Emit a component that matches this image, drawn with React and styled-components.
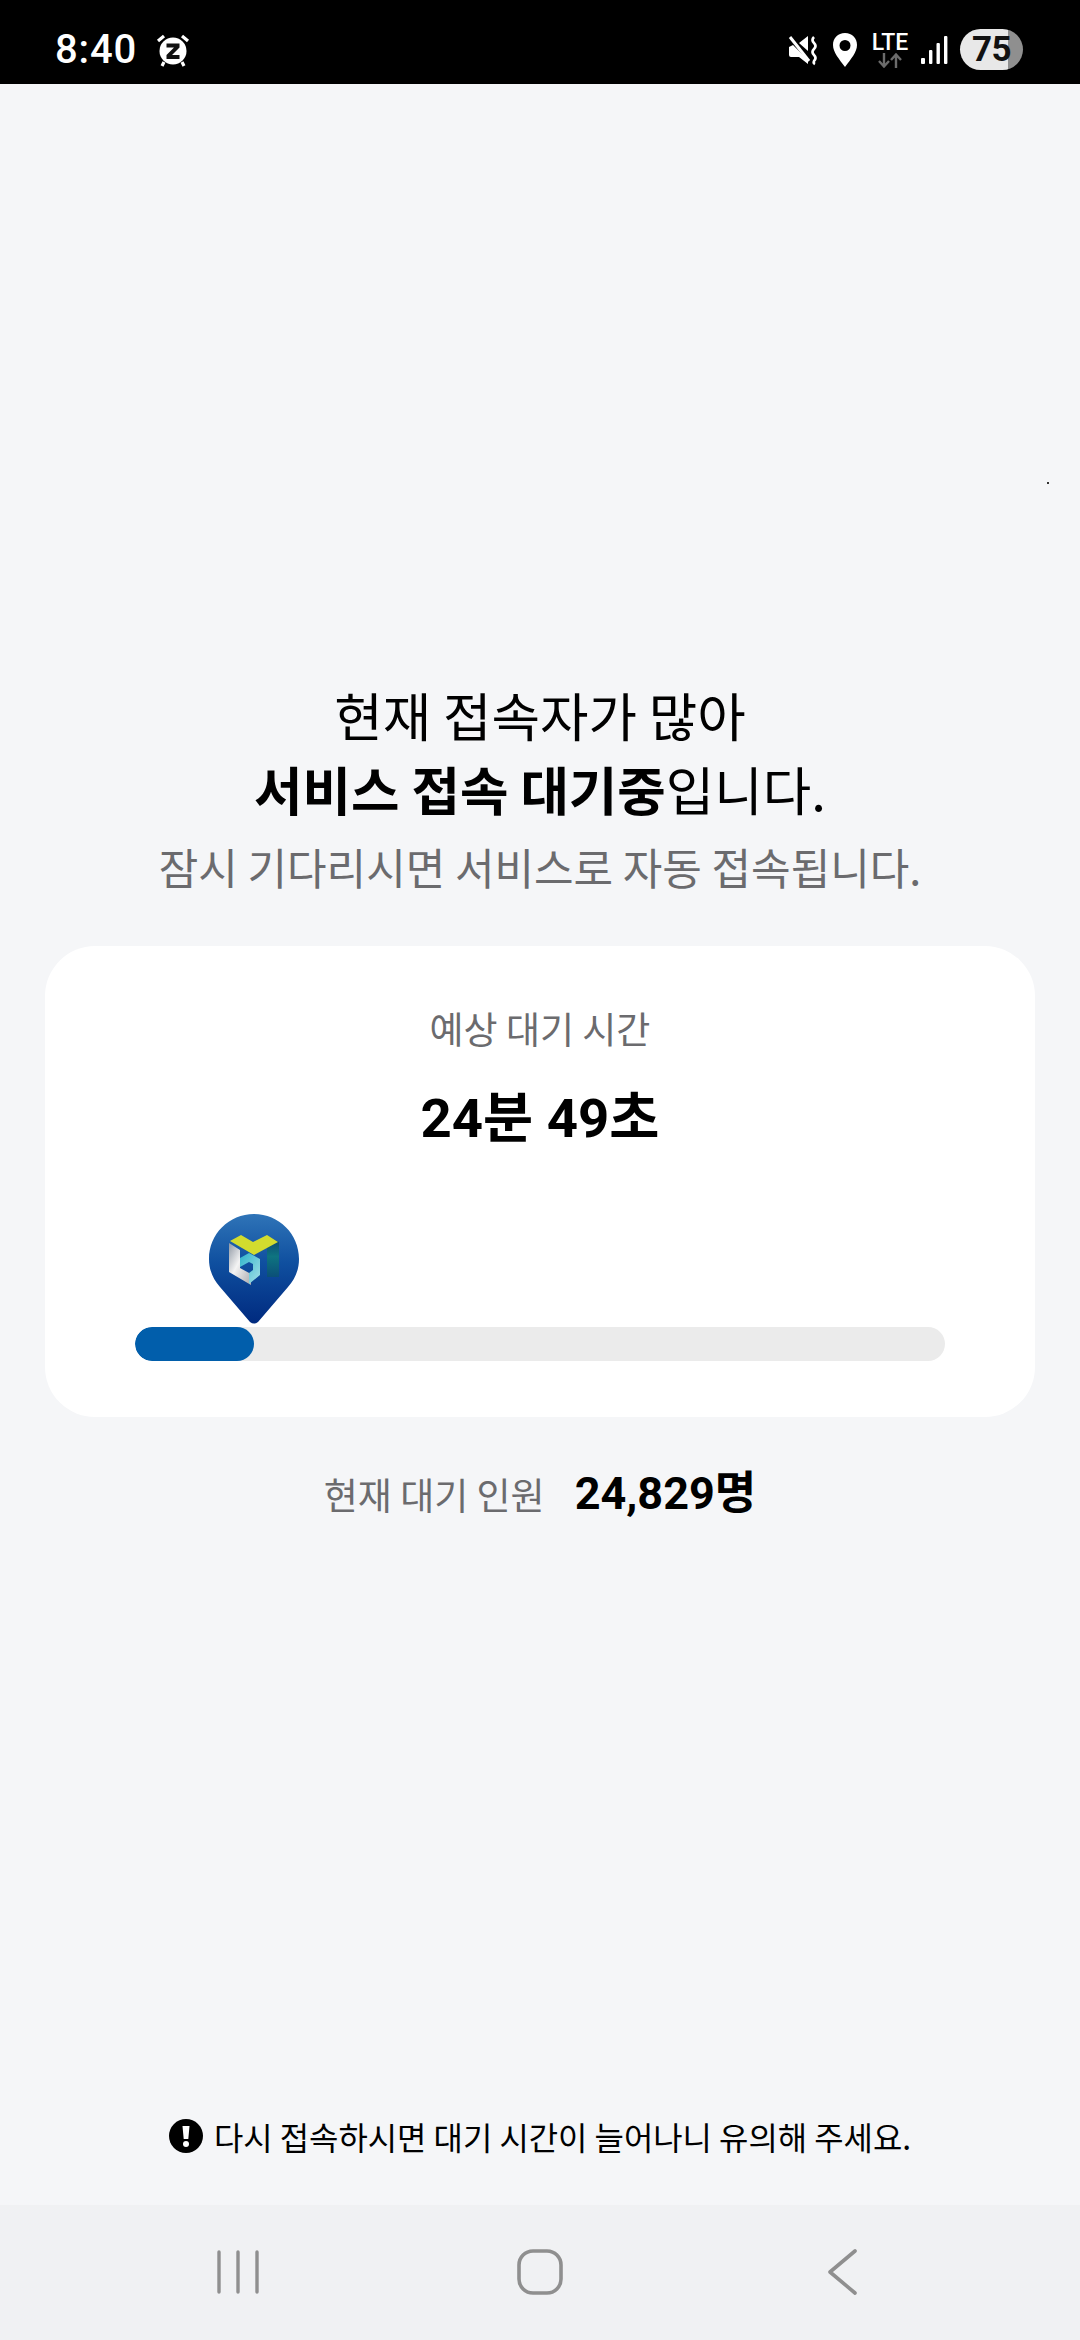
import React from 'react';
import { createGlobalStyle, styled } from 'styled-components';

const FONT = `'Noto Sans CJK KR', 'Noto Sans', sans-serif`;
const NUM_FONT = `Roboto, 'Noto Sans CJK KR', sans-serif`;

const GlobalStyle = createGlobalStyle`
  html, body {
    margin: 0;
    padding: 0;
    background: #f5f6f8;
  }
  * { box-sizing: border-box; }
`;

function App() {
  return (
    <Screen>
      <GlobalStyle />
      <StatusBar>
        <StatusLeft>
          <Clock>8:40</Clock>
          <AlarmIcon />
        </StatusLeft>
        <StatusRight>
          <MuteIcon />
          <PinIcon />
          <LteIcon />
          <SignalIcon />
          <Battery>
            <BatteryText>75</BatteryText>
          </Battery>
        </StatusRight>
      </StatusBar>

      <Main>
        <Speck />
        <Title>현재 접속자가 많아</Title>
        <Title>
          <strong>서비스 접속 대기중</strong>입니다.
        </Title>
        <Subtitle>잠시 기다리시면 서비스로 자동 접속됩니다.</Subtitle>

        <Card>
          <CardLabel>예상 대기 시간</CardLabel>
          <WaitTime>24분 49초</WaitTime>
          <Progress>
            <Marker>
              <MarkerPin />
            </Marker>
            <Track>
              <Fill />
            </Track>
          </Progress>
        </Card>

        <QueueRow>
          <QueueLabel>현재 대기 인원</QueueLabel>
          <QueueCount>24,829명</QueueCount>
        </QueueRow>

        <Notice>
          <NoticeIcon />
          <NoticeText>다시 접속하시면 대기 시간이 늘어나니 유의해 주세요.</NoticeText>
        </Notice>
      </Main>

      <NavBar>
        <RecentsIcon />
        <HomeIcon />
        <BackIcon />
      </NavBar>
    </Screen>
  );
}

export default App;

function AlarmIcon() {
  return (
    <svg width="34" height="34" viewBox="0 0 34 34">
      <circle cx="17" cy="18" r="13.5" fill="#fff" />
      <path d="M2 8 L8 3 M32 8 L26 3 M8 29 L6 33 M26 29 L28 33" stroke="#fff" strokeWidth="3.2" />
      <path d="M10.5 10.5 H23.5 V14.5 L16 22 H23.5 V26 H10.5 V22 L18 14.5 H10.5 Z" fill="#111" />
    </svg>
  );
}

function MuteIcon() {
  return (
    <svg width="32" height="32" viewBox="0 0 32 32">
      <path d="M1 13 L5 11 L20 26 V30 L11 23 H3 Q1 23 1 21 Z M11 9 L20 2 V17 Z" fill="#fff" />
      <path d="M2 3 L21 27" stroke="#fff" strokeWidth="3" />
      <path
        d="M26 3 Q23 6 26 9 Q29 12 26 15 Q23 18 26 21 Q29 24 26 27 Q25 29 27 30"
        stroke="#fff"
        strokeWidth="2.6"
        fill="none"
      />
    </svg>
  );
}

function PinIcon() {
  return (
    <svg width="26" height="36" viewBox="0 0 26 36">
      <path
        fillRule="evenodd"
        d="M13 1 C5.8 1 1 6.4 1 13 C1 20 7 27 13 35 C19 27 25 20 25 13 C25 6.4 20.2 1 13 1 Z M13 8 A5.5 5.5 0 1 1 13 19 A5.5 5.5 0 1 1 13 8 Z"
        fill="#fff"
      />
    </svg>
  );
}

function LteIcon() {
  return (
    <LteWrap>
      <LteText>LTE</LteText>
      <svg width="26" height="15" viewBox="0 0 26 15">
        <path d="M7 0 V13 M2 8 L7 13.5 L12 8" stroke="#6b6b6b" strokeWidth="2.4" fill="none" />
        <path d="M19 15 V2 M14 7 L19 1.5 L24 7" stroke="#6b6b6b" strokeWidth="2.4" fill="none" />
      </svg>
    </LteWrap>
  );
}

function SignalIcon() {
  return (
    <svg width="28" height="30" viewBox="0 0 28 30">
      <rect x="1" y="23" width="4" height="6" rx="1" fill="#fff" />
      <rect x="9" y="15" width="3.4" height="14" rx="1" fill="#fff" />
      <rect x="16.5" y="8" width="3.4" height="21" rx="1" fill="#fff" />
      <rect x="24" y="1" width="3.4" height="28" rx="1" fill="#fff" />
    </svg>
  );
}

function MarkerPin() {
  return (
    <svg width="90" height="110" viewBox="0 0 90 110">
      <defs>
        <linearGradient id="pinBlue" x1="0" y1="0" x2="0" y2="1">
          <stop offset="0" stopColor="#2f74b8" />
          <stop offset="0.45" stopColor="#0f4f9f" />
          <stop offset="1" stopColor="#002a7f" />
        </linearGradient>
        <linearGradient id="logoGrey" x1="0" y1="0" x2="1" y2="1">
          <stop offset="0" stopColor="#8f98a4" />
          <stop offset="0.45" stopColor="#f4f4f4" />
          <stop offset="1" stopColor="#a9a9ad" />
        </linearGradient>
        <linearGradient id="logoTeal" x1="0" y1="0" x2="0" y2="1">
          <stop offset="0" stopColor="#0b3f70" />
          <stop offset="0.5" stopColor="#0e7480" />
          <stop offset="1" stopColor="#0b4f78" />
        </linearGradient>
        <linearGradient id="logoCyan" x1="0" y1="0" x2="1" y2="1">
          <stop offset="0" stopColor="#2fb4cc" />
          <stop offset="1" stopColor="#a5e0e6" />
        </linearGradient>
      </defs>
      <path
        d="M45 0 C20 0 0 20 0 45 C0 56 4 65 11 73 L41 108 Q45 111 49 108 L79 73 C86 65 90 56 90 45 C90 20 70 0 45 0 Z"
        fill="url(#pinBlue)"
      />
      <g transform="translate(11 11)">
        <path d="M9 18 L20 25 V43 L31 49 V60 L9 47 Z" fill="url(#logoGrey)" />
        <path d="M47 11 L59 17 V52 L47 52 Z" fill="url(#logoTeal)" />
        <path d="M20 33 L29 28 L40 34 V50 L29 59 V48 L33 45 V39 L29 37 L20 42 Z" fill="url(#logoCyan)" />
        <path d="M10 16 L21 10 L33 17 L47 10 L58 17 L34 30 Z" fill="#d2dc2e" />
      </g>
    </svg>
  );
}

function NoticeIcon() {
  return (
    <svg width="34" height="34" viewBox="0 0 34 34">
      <circle cx="17" cy="17" r="17" fill="#000" />
      <path d="M13.5 7 H20.5 L19.3 20 H14.7 Z" fill="#fff" />
      <circle cx="17" cy="25" r="3" fill="#fff" />
    </svg>
  );
}

function RecentsIcon() {
  return (
    <NavIconBox>
      <svg width="42" height="44" viewBox="0 0 42 44">
        <path d="M2 2 V42 M21 2 V42 M40 2 V42" stroke="#8f8f8f" strokeWidth="3.4" strokeLinecap="round" />
      </svg>
    </NavIconBox>
  );
}

function HomeIcon() {
  return (
    <NavIconBox>
      <svg width="46" height="46" viewBox="0 0 46 46">
        <rect x="2" y="2" width="42" height="42" rx="14" fill="none" stroke="#8f8f8f" strokeWidth="3.6" />
      </svg>
    </NavIconBox>
  );
}

function BackIcon() {
  return (
    <NavIconBox>
      <svg width="30" height="46" viewBox="0 0 30 46">
        <path d="M28 2 L3 23 L28 44" fill="none" stroke="#8f8f8f" strokeWidth="3.6" strokeLinecap="round" strokeLinejoin="round" />
      </svg>
    </NavIconBox>
  );
}

const Screen = styled.div`
  width: 1080px;
  height: 2340px;
  display: flex;
  flex-direction: column;
  background: #f5f6f8;
  font-family: ${FONT};
  overflow: hidden;
`;

const StatusBar = styled.div`
  height: 84px;
  flex-shrink: 0;
  background: #000;
  display: flex;
  align-items: center;
  justify-content: space-between;
  padding: 15px 57px 0 55px;
`;

const StatusLeft = styled.div`
  display: flex;
  align-items: center;
  gap: 19px;
`;

const Clock = styled.span`
  font-family: Roboto, sans-serif;
  font-size: 40px;
  font-weight: 500;
  color: #fff;
  letter-spacing: 0.8px;
`;

const StatusRight = styled.div`
  display: flex;
  align-items: center;
  gap: 12px;
`;

const LteWrap = styled.div`
  display: flex;
  flex-direction: column;
  align-items: center;
  width: 34px;
  margin: 0 1px 0 3px;
`;

const LteText = styled.span`
  font-family: Roboto, sans-serif;
  font-size: 23px;
  line-height: 21px;
  font-weight: 500;
  color: #fff;
`;

const Battery = styled.div`
  width: 63px;
  height: 41px;
  border-radius: 21px;
  background: linear-gradient(to right, #e8e8e8 48px, #8f8f8f 48px);
  display: flex;
  align-items: center;
  justify-content: center;
`;

const BatteryText = styled.span`
  font-family: Roboto, sans-serif;
  font-size: 35px;
  font-weight: 700;
  color: #111;
  letter-spacing: -0.5px;
`;

const Main = styled.main`
  position: relative;
  flex: 1;
  display: flex;
  flex-direction: column;
  align-items: center;
  padding: 593px 45px 0;
`;

const Speck = styled.i`
  position: absolute;
  top: 398px;
  left: 1047px;
  width: 2px;
  height: 2px;
  background: #333;
`;

const Title = styled.h1`
  margin: 0;
  font-size: 52.7px;
  line-height: 74px;
  font-weight: 400;
  color: #000;
  strong {
    font-weight: 700;
  }
`;

const Subtitle = styled.p`
  margin: 4px 0 0;
  font-size: 43px;
  line-height: 74px;
  font-weight: 400;
  color: #6b6b6e;
`;

const Card = styled.section`
  width: 990px;
  height: 471px;
  margin-top: 43px;
  padding: 56px 90px 0;
  background: #fff;
  border-radius: 50px;
  display: flex;
  flex-direction: column;
  align-items: center;
`;

const CardLabel = styled.div`
  font-size: 37px;
  line-height: 52px;
  color: #6b6b6e;
`;

const WaitTime = styled.div`
  margin-top: 27px;
  font-family: ${NUM_FONT};
  font-size: 54.5px;
  line-height: 74px;
  font-weight: 700;
  color: #000;
`;

const Progress = styled.div`
  position: relative;
  width: 810px;
  margin-top: 172px;
`;

const Marker = styled.div`
  position: absolute;
  left: 74px;
  bottom: 37px;
  line-height: 0;
`;

const Track = styled.div`
  height: 34px;
  border-radius: 17px;
  background: #ebebeb;
  overflow: hidden;
`;

const Fill = styled.div`
  width: 119px;
  height: 100%;
  border-radius: 17px;
  background: #015eab;
`;

const QueueRow = styled.div`
  display: flex;
  align-items: center;
  gap: 30px;
  margin-top: 45px;
`;

const QueueLabel = styled.span`
  font-size: 37px;
  line-height: 64px;
  color: #6b6b6e;
`;

const QueueCount = styled.span`
  font-family: ${NUM_FONT};
  font-size: 45px;
  line-height: 64px;
  font-weight: 700;
  color: #000;
`;

const Notice = styled.div`
  margin-top: auto;
  margin-bottom: 47px;
  display: flex;
  align-items: center;
  gap: 11px;
`;

const NoticeText = styled.span`
  font-size: 31.9px;
  line-height: 44px;
  color: #000;
`;

const NavBar = styled.nav`
  height: 135px;
  flex-shrink: 0;
  background: #f0f1f3;
  display: grid;
  grid-template-columns: repeat(3, 302px);
  padding: 0 84px 2px 87px;
`;

const NavIconBox = styled.div`
  display: flex;
  align-items: center;
  justify-content: center;
  line-height: 0;
`;
